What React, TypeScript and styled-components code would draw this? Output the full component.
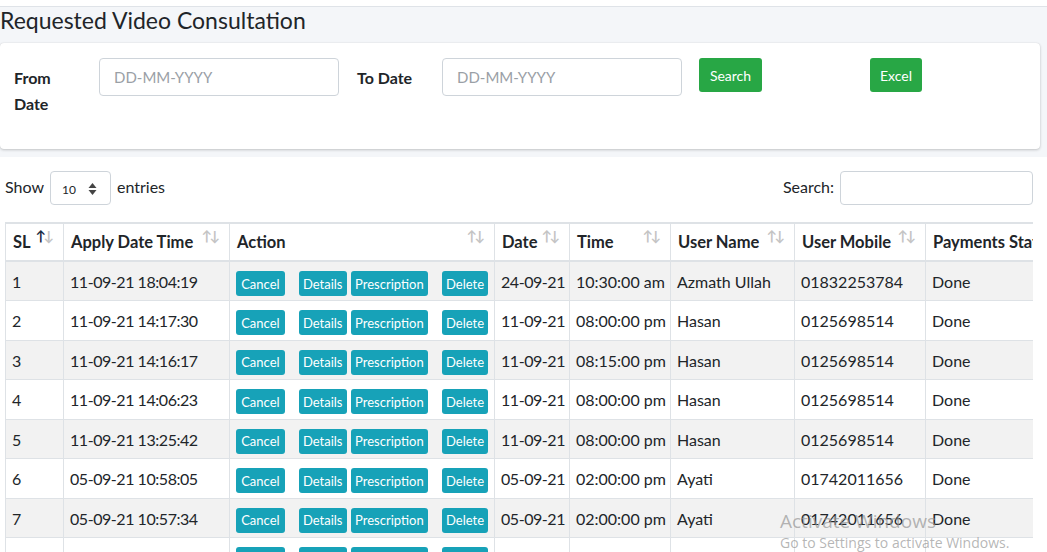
import React from "react";
import styled, { createGlobalStyle, css } from "styled-components";

const FONT = `"Lato", "Liberation Sans", sans-serif`;

const GlobalStyle = createGlobalStyle`
  html, body {
    margin: 0;
    padding: 0;
    background: #ffffff;
    font-family: ${FONT};
    color: #212529;
  }
  * { box-sizing: border-box; }
`;

const Page = styled.div`
  position: relative;
  width: 1047px;
  height: 552px;
  overflow: hidden;
  background: #f4f6f9;
`;

const TopStrip = styled.div`
  height: 7px;
  background: #ffffff;
  border-bottom: 1px solid #dfe3e8;
`;

const Title = styled.h3`
  margin: 0;
  height: 36px;
  font-size: 23px;
  font-weight: 400;
  line-height: 27px;
  color: #212529;
`;

const FilterCard = styled.section`
  margin-right: 7px;
  height: 106px;
  background: #ffffff;
  border-radius: 4px;
  box-shadow: 0 0 1px rgba(0, 0, 0, 0.13), 0 1px 3px rgba(0, 0, 0, 0.2);
  padding: 15px 0 0 14px;
`;

const FilterRow = styled.div`
  display: flex;
  align-items: flex-start;
`;

const FieldLabel = styled.label<{ $width: number }>`
  width: ${(p) => p.$width}px;
  padding: 7px 20px 0 0;
  font-size: 16px;
  font-weight: 700;
  line-height: 26px;
  color: #212529;
`;

const DateInput = styled.input<{ $mr: number }>`
  width: 240px;
  height: 38px;
  margin-right: ${(p) => p.$mr}px;
  padding: 0 14px;
  border: 1px solid #ced4da;
  border-radius: 4px;
  font-family: ${FONT};
  font-size: 15px;
  color: #495057;
  outline: none;
  &::placeholder {
    color: #9aa0a6;
  }
`;

const GreenButton = styled.button<{ $width: number; $mr?: number }>`
  width: ${(p) => p.$width}px;
  height: 34px;
  margin-right: ${(p) => p.$mr ?? 0}px;
  padding: 0;
  border: none;
  border-radius: 3px;
  background: #28a745;
  color: #ffffff;
  font-family: ${FONT};
  font-size: 14px;
`;

const TablePanel = styled.section`
  margin-top: 8px;
  height: 395px;
  background: #ffffff;
  padding: 14px 14px 0 5px;
`;

const Toolbar = styled.div`
  display: flex;
  justify-content: space-between;
  align-items: center;
  height: 34px;
  margin-bottom: 17px;
  font-size: 16px;
`;

const Group = styled.div`
  display: flex;
  align-items: center;
  gap: 6px;
  & > span {
    margin-top: -3px;
  }
`;

const SelectBox = styled.div`
  display: flex;
  align-items: center;
  justify-content: space-between;
  width: 61px;
  height: 34px;
  padding: 2px 13px 0 11px;
  border: 1px solid #ced4da;
  border-radius: 4px;
  font-size: 12px;
  color: #212529;
`;

const SearchInput = styled.input`
  width: 193px;
  height: 34px;
  border: 1px solid #ced4da;
  border-radius: 4px;
  outline: none;
`;

const TableWrap = styled.div`
  width: 1028px;
  overflow: hidden;
`;

const Table = styled.table`
  width: 1090px;
  border-collapse: collapse;
  table-layout: fixed;
  font-size: 16px;
`;

const Th = styled.th<{ $sort?: "asc" | "none" }>`
  position: relative;
  height: 38px;
  padding: 0 7px;
  text-align: left;
  font-weight: 700;
  font-size: 16.5px;
  white-space: nowrap;
  overflow: hidden;
  border: 1px solid #dee2e6;
  border-top: 2px solid #dee2e6;
  border-bottom: 2px solid #dee2e6;
  ${(p) =>
    p.$sort &&
    css`
      &::before,
      &::after {
        position: absolute;
        top: 3px;
        font-size: 14px;
        font-weight: 700;
        color: #c4c4c4;
      }
      &::before {
        content: "↑";
        right: 17px;
        color: ${p.$sort === "asc" ? "#1a2b45" : "#c4c4c4"};
      }
      &::after {
        content: "↓";
        right: 9px;
      }
    `}
`;

const Tr = styled.tr<{ $odd: boolean }>`
  background: ${(p) => (p.$odd ? "#f2f2f2" : "#ffffff")};
`;

const Td = styled.td<{ $tight?: boolean }>`
  height: 39.5px;
  padding: 8px 6px 0 6px;
  vertical-align: top;
  line-height: 24px;
  white-space: nowrap;
  overflow: hidden;
  letter-spacing: ${(p) => (p.$tight ? "-0.45px" : "normal")};
  border: 1px solid #dee2e6;
`;

const ActionCell = styled.td`
  padding: 9px 6px 0 6px;
  vertical-align: top;
  border: 1px solid #dee2e6;
`;

const Actions = styled.div`
  display: flex;
`;

const ActionBtn = styled.button<{ $width: number; $mr: number }>`
  width: ${(p) => p.$width}px;
  height: 25px;
  margin-right: ${(p) => p.$mr}px;
  padding: 0;
  border: none;
  border-radius: 3px;
  background: #17a2b8;
  color: #ffffff;
  font-family: ${FONT};
  font-size: 13px;
`;

const Watermark = styled.div`
  position: absolute;
  left: 780px;
  top: 509px;
  pointer-events: none;
  font-family: "Open Sans", "Noto Sans", sans-serif;
  color: rgba(150, 150, 150, 0.7);
`;

const WmTitle = styled.div`
  font-size: 19px;
  line-height: 24px;
`;

const WmText = styled.div`
  font-size: 14px;
  line-height: 20px;
`;

const SortCaret = () => (
  <svg width="9" height="14" viewBox="0 0 9 14">
    <path d="M4.5 1 L8.5 6 H0.5 Z" fill="#444" />
    <path d="M4.5 13 L8.5 8 H0.5 Z" fill="#444" />
  </svg>
);

const columns: { label: string; width: number; sort?: "asc" | "none" }[] = [
  { label: "SL", width: 58, sort: "asc" },
  { label: "Apply Date Time", width: 166, sort: "none" },
  { label: "Action", width: 265, sort: "none" },
  { label: "Date", width: 75, sort: "none" },
  { label: "Time", width: 101, sort: "none" },
  { label: "User Name", width: 124, sort: "none" },
  { label: "User Mobile", width: 131, sort: "none" },
  { label: "Payments Status", width: 170 },
];

const rows = [
  ["1", "11-09-21 18:04:19", "24-09-21", "10:30:00 am", "Azmath Ullah", "01832253784", "Done"],
  ["2", "11-09-21 14:17:30", "11-09-21", "08:00:00 pm", "Hasan", "0125698514", "Done"],
  ["3", "11-09-21 14:16:17", "11-09-21", "08:15:00 pm", "Hasan", "0125698514", "Done"],
  ["4", "11-09-21 14:06:23", "11-09-21", "08:00:00 pm", "Hasan", "0125698514", "Done"],
  ["5", "11-09-21 13:25:42", "11-09-21", "08:00:00 pm", "Hasan", "0125698514", "Done"],
  ["6", "05-09-21 10:58:05", "05-09-21", "02:00:00 pm", "Ayati", "01742011656", "Done"],
  ["7", "05-09-21 10:57:34", "05-09-21", "02:00:00 pm", "Ayati", "01742011656", "Done"],
  ["8", "04-09-21 16:20:11", "04-09-21", "06:00:00 pm", "Shamim Khalid", "01711458962", "Done"],
];

export default function App() {
  return (
    <Page>
      <GlobalStyle />
      <TopStrip />
      <Title>Requested Video Consultation</Title>
      <FilterCard>
        <FilterRow>
          <FieldLabel $width={85}>From Date</FieldLabel>
          <DateInput placeholder="DD-MM-YYYY" $mr={18} />
          <FieldLabel $width={85}>To Date</FieldLabel>
          <DateInput placeholder="DD-MM-YYYY" $mr={17} />
          <GreenButton $width={63} $mr={108}>
            Search
          </GreenButton>
          <GreenButton $width={52}>Excel</GreenButton>
        </FilterRow>
      </FilterCard>
      <TablePanel>
        <Toolbar>
          <Group>
            <span>Show</span>
            <SelectBox>
              <span>10</span>
              <SortCaret />
            </SelectBox>
            <span>entries</span>
          </Group>
          <Group>
            <span>Search:</span>
            <SearchInput />
          </Group>
        </Toolbar>
        <TableWrap>
          <Table>
            <colgroup>
              {columns.map((c) => (
                <col key={c.label} style={{ width: c.width }} />
              ))}
            </colgroup>
            <thead>
              <tr>
                {columns.map((c) => (
                  <Th key={c.label} $sort={c.sort}>
                    {c.label}
                  </Th>
                ))}
              </tr>
            </thead>
            <tbody>
              {rows.map((r, i) => (
                <Tr key={r[0]} $odd={i % 2 === 0}>
                  <Td>{r[0]}</Td>
                  <Td $tight>{r[1]}</Td>
                  <ActionCell>
                    <Actions>
                      <ActionBtn $width={49} $mr={14}>Cancel</ActionBtn>
                      <ActionBtn $width={48} $mr={4}>Details</ActionBtn>
                      <ActionBtn $width={78} $mr={14}>Prescription</ActionBtn>
                      <ActionBtn $width={46} $mr={0}>Delete</ActionBtn>
                    </Actions>
                  </ActionCell>
                  <Td $tight>{r[2]}</Td>
                  <Td>{r[3]}</Td>
                  <Td>{r[4]}</Td>
                  <Td>{r[5]}</Td>
                  <Td>{r[6]}</Td>
                </Tr>
              ))}
            </tbody>
          </Table>
        </TableWrap>
      </TablePanel>
      <Watermark>
        <WmTitle>Activate Windows</WmTitle>
        <WmText>Go to Settings to activate Windows.</WmText>
      </Watermark>
    </Page>
  );
}
